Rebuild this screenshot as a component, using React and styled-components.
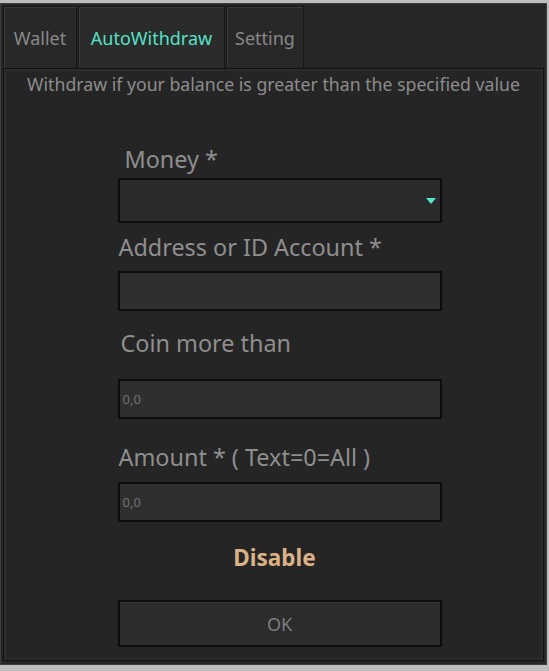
import React from 'react';
import styled, { createGlobalStyle } from 'styled-components';

const Global = createGlobalStyle`
  html, body {
    margin: 0;
    padding: 0;
    background: #bdbdbd;
  }
  body {
    font-family: "Noto Sans", "Open Sans", sans-serif;
  }
`;

const Window = styled.div`
  box-sizing: border-box;
  width: 547px;
  height: 662px;
  margin-top: 3px;
  background: #262626;
  border: 1px solid #3d3d3d;
  padding: 2px 2px 3px 2px;
  display: flex;
  flex-direction: column;
`;

const TabBar = styled.div`
  display: flex;
  height: 62px;
`;

const Tab = styled.div`
  box-sizing: border-box;
  height: 62px;
  width: ${p => p.w}px;
  display: flex;
  align-items: center;
  justify-content: center;
  font-size: 18px;
  color: ${p => (p.active ? '#55e0c6' : '#888888')};
  background: ${p => (p.active ? '#2b2b2b' : '#282828')};
  border: 1px solid #171717;
  border-bottom: none;
  box-shadow: inset 1px 1px 0 #3a3a3a;
  margin-right: 1px;
`;

const Panel = styled.div`
  flex: 1;
  box-sizing: border-box;
  border: 1px solid #111111;
  box-shadow: inset 0 0 0 2px #2c2c2c;
  background: #252525;
  display: flex;
  flex-direction: column;
  align-items: center;
`;

const Note = styled.div`
  margin-top: 3px;
  font-size: 17.7px;
  color: #8c8c8c;
`;

const Form = styled.div`
  width: 324px;
  margin-top: 49px;
  margin-left: 12px;
  display: flex;
  flex-direction: column;
`;

const Label = styled.div`
  font-size: 23.4px;
  color: #8e8e8e;
  line-height: 28px;
  padding-left: ${p => p.indent || 0}px;
  margin-top: ${p => p.top || 0}px;
  margin-bottom: ${p => p.bottom || 0}px;
`;

const Field = styled.div`
  box-sizing: border-box;
  height: ${p => p.h}px;
  background: ${p => (p.select ? '#2a2a2a' : '#2f2f2f')};
  border: 2px solid #0d0d0d;
  display: flex;
  align-items: center;
  justify-content: space-between;
  padding: 0 4px 0 3px;
  font-size: 13px;
  color: #6f6f6f;
`;

const Caret = styled.svg`
  width: 10px;
  height: 8px;
`;

const Status = styled.div`
  align-self: center;
  margin: 21px 10px 0 0;
  font-size: 22.5px;
  font-weight: 700;
  color: #dbb285;
  line-height: 30px;
`;

const Button = styled.div`
  box-sizing: border-box;
  height: 47px;
  margin-top: 27px;
  background: #2c2c2c;
  border: 2px solid #0d0d0d;
  box-shadow: inset 0 1px 0 #363636;
  display: flex;
  align-items: center;
  justify-content: center;
  font-size: 18px;
  color: #7c7c7c;
`;

export default function App() {
  return (
    <>
      <Global />
      <Window>
        <TabBar>
          <Tab w={74}>Wallet</Tab>
          <Tab w={147} active>AutoWithdraw</Tab>
          <Tab w={78}>Setting</Tab>
        </TabBar>
        <Panel>
          <Note>Withdraw if your balance is greater than the specified value</Note>
          <Form>
            <Label indent={7} bottom={5}>Money *</Label>
            <Field h={45} select>
              <span />
              <Caret viewBox="0 0 10 8">
                <path d="M0 1 L10 1 L5 7 Z" fill="#55e6cc" />
              </Caret>
            </Field>
            <Label indent={1} top={10} bottom={10}>Address or ID Account *</Label>
            <Field h={40} />
            <Label indent={3} top={18} bottom={22}>Coin more than</Label>
            <Field h={40}>0,0</Field>
            <Label indent={1} top={24} bottom={11}>Amount * ( Text=0=All )</Label>
            <Field h={40}>0,0</Field>
            <Status>Disable</Status>
            <Button>OK</Button>
          </Form>
        </Panel>
      </Window>
    </>
  );
}
